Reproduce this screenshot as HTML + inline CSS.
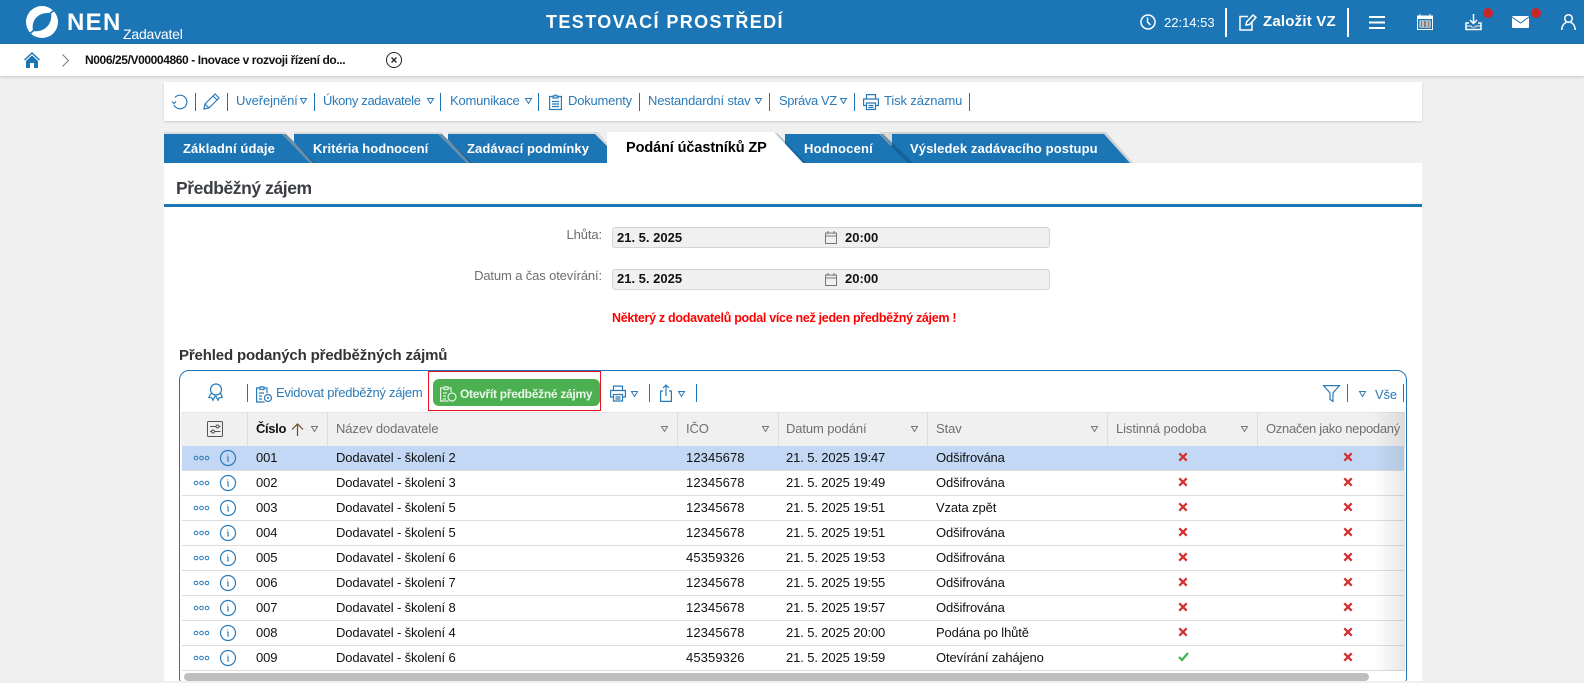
<!DOCTYPE html>
<html lang="cs"><head><meta charset="utf-8"><title>NEN</title>
<style>
html,body{margin:0;padding:0;width:1584px;height:683px;overflow:hidden;background:#f0f0f0}
body{position:relative;font-family:"Liberation Sans",sans-serif;font-size:13px;color:#111}
div,span,svg{position:absolute}
span{white-space:nowrap;line-height:16px}
svg{overflow:visible}
.b{font-weight:bold}
.l{color:#2a7ab8;letter-spacing:-.12px}
.sep{width:1px;height:18px;background:#1c75b5}
.tab{color:#fff;font-weight:bold;top:141px;letter-spacing:.1px}
.hd{color:#6f6f6f;top:421px;letter-spacing:-.1px}
.vs{width:1px;top:412px;height:34px;background:#ddd}
.r{left:182px;width:1222px;height:24px;border-bottom:1px solid #ddd;background:#fff}
.r span{top:4px;letter-spacing:-.12px}
.n{left:74px}.m{left:154px}.r .i{left:504px;letter-spacing:.1px}.d{left:604px}.s{left:754px}
.r svg{top:0;left:0}
.tri{fill:none;stroke:#2a7ab8;stroke-width:1}
.gt{fill:none;stroke:#777;stroke-width:1}
.ic{fill:none;stroke:#2a7ab8;stroke-width:1.2}
.wi{fill:none;stroke:#fff;stroke-width:1.5}
</style></head><body>

<!-- top bar -->
<div style="left:0;top:0;width:1584px;height:44px;background:#1c75b5"></div>
<svg style="left:26px;top:6px" width="32" height="32" viewBox="0 0 32 32">
<circle cx="16" cy="16" r="16" fill="#fff"/>
<path fill="#1c75b5" d="M7 25C5 15 11 6 25 7c2 10-6 20-18 18z"/>
<path d="M24 7.500L29 3.500M7.500 24.500L3 28.500" stroke="#1c75b5" stroke-width="1.600" fill="none"/>
</svg>
<span style="left:67px;top:10px;font-size:24px;line-height:26px;font-weight:bold;color:#fff;letter-spacing:1.300px">NEN</span>
<span style="left:123px;top:26px;font-size:14px;color:#fff;letter-spacing:-.2px">Zadavatel</span>
<span style="left:546px;top:12px;font-size:18px;line-height:21px;font-weight:bold;color:#fff;letter-spacing:1.400px">TESTOVACÍ PROSTŘEDÍ</span>
<svg style="left:1140px;top:14px" width="16" height="16" viewBox="0 0 16 16"><circle cx="8" cy="8" r="7" class="wi"/><path class="wi" d="M7.500 3.500V8l3 3"/></svg>
<span style="left:1164px;top:15px;color:#fff;font-size:13px">22:14:53</span>
<div style="left:1225px;top:8px;width:2px;height:29px;background:#fff"></div>
<svg style="left:1239px;top:14px" width="18" height="17" viewBox="0 0 18 17"><path class="wi" d="M9 2.500H1v13.500h12V8M7 11l.6-3L14 1l3 2.500-6.500 7z"/></svg>
<span class="b" style="left:1263px;top:14px;color:#fff;font-size:15px;letter-spacing:.2px">Založit VZ</span>
<div style="left:1347px;top:8px;width:2px;height:29px;background:#fff"></div>
<svg style="left:1369px;top:15px" width="16" height="15" viewBox="0 0 16 15"><path stroke="#fff" stroke-width="2" d="M0 2h16M0 7.500h16M0 13h16"/></svg>
<svg style="left:1417px;top:14px" width="16" height="16" viewBox="0 0 16 16"><rect x=".5" y="2" width="15" height="13.500" fill="none" stroke="#fff"/><rect y="2" width="16" height="3" fill="#fff"/><path stroke="#fff" d="M3 0v3M13 0v3M3 7h10v6H3zM3 9h10M3 11h10M6 7v6M10 7v6"/></svg>
<svg style="left:1465px;top:14px" width="17" height="17" viewBox="0 0 17 17"><path class="wi" stroke-width="1.200" d="M8.500 0v9M5 6l3.500 3.500L12 6M4 9H1v6.500h15V9h-3"/><path stroke="#fff" d="M1 12h5l1 1h3l1-1h5"/></svg>
<div style="left:1483px;top:8px;width:10px;height:10px;border-radius:5px;background:#c62828"></div>
<svg style="left:1512px;top:16px" width="17" height="12" viewBox="0 0 17 12"><rect width="17" height="12" rx="1" fill="#fff"/><path d="M0 1l8.500 6L17 1" fill="none" stroke="#1c75b5"/></svg>
<div style="left:1531px;top:8px;width:10px;height:10px;border-radius:5px;background:#c62828"></div>
<svg style="left:1561px;top:14px" width="15" height="16" viewBox="0 0 15 16"><circle cx="7.500" cy="4.500" r="3.800" class="wi"/><path class="wi" d="M.8 16c0-4.500 2.500-7 4.500-7.500M14.200 16c0-4.500-2.500-7-4.500-7.500"/></svg>

<!-- breadcrumb -->
<div style="left:0;top:44px;width:1584px;height:32px;background:#fff;box-shadow:0 1px 3px rgba(0,0,0,.18)"></div>
<svg style="left:24px;top:52px" width="16" height="16" viewBox="0 0 16 16"><path fill="#1c75b5" d="M8 0L0 7.500l1 1L8 2l7 6.500 1-1z"/><path fill="#1c75b5" d="M2 9l6-5.500L14 9v7h-4v-5H6v5H2z"/></svg>
<svg style="left:62px;top:54px" width="7" height="13" viewBox="0 0 7 13"><path d="M.5.5l6 6-6 6" fill="none" stroke="#777"/></svg>
<span class="b" style="left:85px;top:52px;font-size:12px;color:#111;letter-spacing:-.4px">N006/25/V00004860 - Inovace v rozvoji řízení do...</span>
<svg style="left:386px;top:52px" width="16" height="16" viewBox="0 0 16 16"><circle cx="8" cy="8" r="7.500" fill="none" stroke="#222"/><path stroke="#222" stroke-width="1.300" d="M5.500 5.500l5 5M10.500 5.500l-5 5"/></svg>

<!-- toolbar -->
<div style="left:164px;top:82px;width:1258px;height:39px;background:#fff;box-shadow:0 1px 2px rgba(0,0,0,.15)"></div>
<svg style="left:172px;top:94px" width="16" height="16" viewBox="0 0 16 16"><path class="ic" d="M3 3.500A6.800 6.800 0 1 1 2 11M0 7.500l2 2 2-2"/></svg>
<div class="sep" style="left:195px;top:93px"></div>
<svg style="left:203px;top:93px" width="17" height="17" viewBox="0 0 17 17"><path class="ic" d="M1 16l1-5L12 1l4 4L6 15zM2 11l4 4M10 3l4 4"/></svg>
<div class="sep" style="left:227px;top:93px"></div>
<span class="l" style="left:236px;top:93px">Uveřejnění</span>
<svg style="left:300px;top:98px" width="7" height="6"><path class="tri" d="M.5.5h6L3.500 5.500z"/></svg>
<div class="sep" style="left:314px;top:93px"></div>
<span class="l" style="left:323px;top:93px;letter-spacing:-.36px">Úkony zadavatele</span>
<svg style="left:427px;top:98px" width="7" height="6"><path class="tri" d="M.5.5h6L3.500 5.500z"/></svg>
<div class="sep" style="left:440px;top:93px"></div>
<span class="l" style="left:450px;top:93px;letter-spacing:-.2px">Komunikace</span>
<svg style="left:525px;top:98px" width="7" height="6"><path class="tri" d="M.5.5h6L3.500 5.500z"/></svg>
<div class="sep" style="left:538px;top:93px"></div>
<svg style="left:549px;top:94px" width="13" height="16" viewBox="0 0 13 16"><path class="ic" d="M4 2.500H.6v13h11.800v-13H9M4 4V2h1.500a1 1 0 0 1 2 0H9v2zM3 7.500h7M3 10h7M3 12.500h7"/></svg>
<span class="l" style="left:568px;top:93px;letter-spacing:-.2px">Dokumenty</span>
<div class="sep" style="left:639px;top:93px"></div>
<span class="l" style="left:648px;top:93px;letter-spacing:-.18px">Nestandardní stav</span>
<svg style="left:755px;top:98px" width="7" height="6"><path class="tri" d="M.5.5h6L3.500 5.500z"/></svg>
<div class="sep" style="left:769px;top:93px"></div>
<span class="l" style="left:779px;top:93px;letter-spacing:-.4px">Správa VZ</span>
<svg style="left:840px;top:98px" width="7" height="6"><path class="tri" d="M.5.5h6L3.500 5.500z"/></svg>
<div class="sep" style="left:854px;top:93px"></div>
<svg style="left:863px;top:94px" width="16" height="16" viewBox="0 0 16 16"><path class="ic" d="M3.500 5V.6h9V5M3.500 11.500H.6V5h14.800v6.500h-2.900M3.500 9h9v6.500h-9zM5.500 11.500h5M5.500 13.500h5"/></svg>
<span class="l" style="left:884px;top:93px">Tisk záznamu</span>
<div class="sep" style="left:969px;top:93px"></div>

<!-- tabs -->
<svg style="left:0;top:0" width="1584" height="170">
<polygon points="891,132 1106,132 1133,163 891,163" fill="#d2d2d2"/>
<polygon points="891,134 1104,134 1130,163 891,163" fill="#1c75b5"/>
<polygon points="785,134 879,134 908,163 785,163" fill="#1c75b5"/>
<polygon points="879,132 892,132 892,146" fill="#d8d8d8"/>
<polygon points="448,132 598,132 610,146 448,163" fill="#dcdcdc"/>
<polygon points="448,134 595,134 607,146 607,163 448,163" fill="#1c75b5"/>
<polygon points="294,132 441,132 470,163 294,163" fill="#dcdcdc"/>
<polygon points="294,134 438,134 467,163 294,163" fill="#1c75b5"/>
<polygon points="164,132 285,132 313,163 164,163" fill="#dcdcdc"/>
<polygon points="282,134 310,163 315,163 286,134" fill="#0f4f80" opacity=".55"/>
<polygon points="164,134 282,134 310,163 164,163" fill="#1c75b5"/>
<polygon points="438,134 467,163 472,163 442,134" fill="#0f4f80" opacity=".55"/>
<polygon points="879,134 908,163 913,163 883,134" fill="#0f4f80" opacity=".55"/>
<polygon points="774,132 803,163 807,163 778,134" fill="#0f4f80" opacity=".3"/>
<polygon points="607,132 774,132 803,163 607,163" fill="#fff"/>
</svg>
<span class="tab" style="left:183px;letter-spacing:.12px">Základní údaje</span>
<span class="tab" style="left:313px;letter-spacing:.02px">Kritéria hodnocení</span>
<span class="tab" style="left:467px;letter-spacing:.08px">Zadávací podmínky</span>
<span class="b" style="left:626px;top:140px;font-size:14.500px;color:#000;letter-spacing:-.1px">Podání účastníků ZP</span>
<span class="tab" style="left:804px;letter-spacing:.2px">Hodnocení</span>
<span class="tab" style="left:910px;letter-spacing:.1px">Výsledek zadávacího postupu</span>

<!-- panel -->
<div style="left:164px;top:163px;width:1258px;height:518px;background:#fff"></div>
<span class="b" style="left:176px;top:178px;font-size:17.500px;line-height:20px;color:#3b3e44;letter-spacing:-.42px">Předběžný zájem</span>
<div style="left:164px;top:204px;width:1258px;height:3px;background:#1c75b5"></div>

<span style="right:982px;top:227px;color:#6e6e6e;letter-spacing:-.1px">Lhůta:</span>
<div style="left:612px;top:227px;width:436px;height:19px;background:#f0f0f0;border:1px solid #d4d4d4;border-radius:3px"></div>
<span class="b" style="left:617px;top:230px;color:#111">21. 5. 2025</span>
<svg style="left:825px;top:231px" width="12" height="13" viewBox="0 0 12 13"><path class="gt" d="M.5 2h11v10.500H.5zM.5 5h11M3 0v3M9 0v3"/></svg>
<span class="b" style="left:845px;top:230px;color:#111">20:00</span>

<span style="right:982px;top:268px;color:#6e6e6e;letter-spacing:-.13px">Datum a čas otevírání:</span>
<div style="left:612px;top:269px;width:436px;height:19px;background:#f0f0f0;border:1px solid #d4d4d4;border-radius:3px"></div>
<span class="b" style="left:617px;top:271px;color:#111">21. 5. 2025</span>
<svg style="left:825px;top:273px" width="12" height="13" viewBox="0 0 12 13"><path class="gt" d="M.5 2h11v10.500H.5zM.5 5h11M3 0v3M9 0v3"/></svg>
<span class="b" style="left:845px;top:271px;color:#111">20:00</span>

<span class="b" style="left:612px;top:310px;color:#f00;font-size:12.500px;letter-spacing:-.3px">Některý z dodavatelů podal více než jeden předběžný zájem !</span>
<span class="b" style="left:179px;top:348px;font-size:15px;color:#333;letter-spacing:-.15px">Přehled podaných předběžných zájmů</span>

<!-- grid -->
<div style="left:179px;top:370px;width:1226px;height:316px;border:1.500px solid #1c75b5;border-radius:10px;box-sizing:content-box;background:#fff"></div>

<svg style="left:208px;top:383px" width="16" height="18" viewBox="0 0 16 18"><circle cx="8" cy="6.500" r="5.500" class="ic"/><path class="ic" d="M3.500 10L.8 14.500l3 .3 1.200 2.500 2-4 1 0 2 4 1.200-2.500 3-.3L12.500 10"/></svg>
<div class="sep" style="left:247px;top:384px"></div>
<svg style="left:256px;top:385px" width="17" height="18" viewBox="0 0 17 18"><path class="ic" d="M4 3H.6v14h8M11 8V3H8M4 4.500V2h1.500a1 1 0 0 1 1.500 0H8v2.500zM3 8h5M3 11h3M3 14h3"/><circle cx="12" cy="13" r="3.500" class="ic"/><circle cx="12" cy="13" r="1" fill="#2a7ab8"/></svg>
<span class="l" style="left:276px;top:385px;letter-spacing:-.25px">Evidovat předběžný zájem</span>

<div style="left:428px;top:371px;width:171px;height:38px;border:1px solid #e8141e"></div>
<div style="left:433px;top:379px;width:167px;height:27px;background:#4caf50;border-radius:6px"></div>
<svg style="left:440px;top:385px" width="17" height="17" viewBox="0 0 17 17"><path fill="none" stroke="#e2f2e3" stroke-width="1.200" d="M4 3H.6v13h8M11 7V3H8M4 4.500V2h1.500a1 1 0 0 1 1.500 0H8v2.500zM3 8h4M3 11h3M3 14h3"/><circle cx="12" cy="12" r="4" fill="none" stroke="#e2f2e3" stroke-width="1.200"/></svg>
<span class="b" style="left:460px;top:386px;color:#e9f6ea;font-size:12px;letter-spacing:-.28px">Otevřít předběžné zájmy</span>

<svg style="left:610px;top:385px" width="16" height="17" viewBox="0 0 16 16"><path class="ic" d="M3.500 5V.6h9V5M3.500 11.500H.6V5h14.800v6.500h-2.900M3.500 9h9v6.500h-9zM5.500 11.500h5M5.500 13.500h5"/></svg>
<svg style="left:631px;top:391px" width="7" height="6"><path class="tri" d="M.5.5h6L3.500 5.500z"/></svg>
<div class="sep" style="left:649px;top:384px"></div>
<svg style="left:660px;top:384px" width="12" height="18" viewBox="0 0 12 18"><path class="ic" d="M3 7H.6v10.400h10.800V7H9M6 12V1M3 4l3-3 3 3"/></svg>
<svg style="left:678px;top:391px" width="7" height="6"><path class="tri" d="M.5.5h6L3.500 5.500z"/></svg>
<div class="sep" style="left:696px;top:384px"></div>
<svg style="left:1323px;top:385px" width="17" height="17" viewBox="0 0 17 17"><path class="ic" d="M.6.6h15.800L10 8v8.400l-3-2V8z"/></svg>
<div class="sep" style="left:1347px;top:384px"></div>
<svg style="left:1359px;top:391px" width="7" height="6"><path class="tri" d="M.5.5h6L3.500 5.500z"/></svg>
<span class="l" style="left:1375px;top:387px">Vše</span>
<div class="sep" style="left:1403px;top:384px"></div>

<!-- header -->
<div style="left:181px;top:412px;width:1224px;height:34px;background:#f0f0f0;border-top:1px solid #e4e4e4;box-sizing:border-box"></div>
<div class="vs" style="left:247px"></div>
<div class="vs" style="left:327px"></div>
<div class="vs" style="left:677px"></div>
<div class="vs" style="left:778px"></div>
<div class="vs" style="left:927px"></div>
<div class="vs" style="left:1107px"></div>
<div class="vs" style="left:1257px"></div>
<svg style="left:207px;top:421px" width="16" height="16" viewBox="0 0 16 16"><rect x=".5" y=".5" width="15" height="15" rx="1" fill="none" stroke="#555"/><path stroke="#555" fill="none" d="M3 5.500h6M12 5.500h1.500M3 10.500h1.500M8 10.500h5.500"/><circle cx="10.500" cy="5.500" r="1.500" fill="none" stroke="#555"/><circle cx="6" cy="10.500" r="1.500" fill="none" stroke="#555"/></svg>
<span class="b" style="left:256px;top:421px;color:#111;letter-spacing:-.35px">Číslo</span>
<svg style="left:291px;top:423px" width="13" height="13" viewBox="0 0 13 13"><path d="M6.500 13V1M1 6.500L6.500 1 12 6.500" fill="none" stroke="#6b4a2a" stroke-width="1.200"/></svg>
<svg style="left:311px;top:426px" width="7" height="6"><path class="gt" d="M.5.5h6L3.500 5.500z"/></svg>
<span class="hd" style="left:336px">Název dodavatele</span>
<svg style="left:661px;top:426px" width="7" height="6"><path class="gt" d="M.5.5h6L3.500 5.500z"/></svg>
<span class="hd" style="left:686px">IČO</span>
<svg style="left:762px;top:426px" width="7" height="6"><path class="gt" d="M.5.5h6L3.500 5.500z"/></svg>
<span class="hd" style="left:786px">Datum podání</span>
<svg style="left:911px;top:426px" width="7" height="6"><path class="gt" d="M.5.5h6L3.500 5.500z"/></svg>
<span class="hd" style="left:936px">Stav</span>
<svg style="left:1091px;top:426px" width="7" height="6"><path class="gt" d="M.5.5h6L3.500 5.500z"/></svg>
<span class="hd" style="left:1116px">Listinná podoba</span>
<svg style="left:1241px;top:426px" width="7" height="6"><path class="gt" d="M.5.5h6L3.500 5.500z"/></svg>
<span class="hd" style="left:1266px;letter-spacing:-.3px">Označen jako nepodaný</span>

<!-- shared symbols -->
<svg width="0" height="0" style="left:0;top:0"><defs>
<g id="act"><circle cx="14" cy="12" r="1.800" fill="none" stroke="#2a7ab8"/><circle cx="19.500" cy="12" r="1.800" fill="none" stroke="#2a7ab8"/><circle cx="25" cy="12" r="1.800" fill="none" stroke="#2a7ab8"/><circle cx="46" cy="12" r="7.500" fill="none" stroke="#2a7ab8" stroke-width="1.200"/><path d="M45.500 8.500v.8M45 11h1v4h1" fill="none" stroke="#2a7ab8" stroke-width="1.100"/></g>
<path id="xx" d="M-3.700-3.700L3.700 3.700M3.700-3.700L-3.700 3.700" stroke="#d32f2f" stroke-width="2.200" fill="none"/>
</defs></svg>

<div class="r" style="top:446px;background:#c2d8f4"><svg width="1222" height="25"><use href="#act"/><use href="#xx" x="1001" y="11"/><use href="#xx" x="1166" y="11"/></svg><span class="n">001</span><span class="m">Dodavatel - školení 2</span><span class="i">12345678</span><span class="d">21. 5. 2025 19:47</span><span class="s">Odšifrována</span></div>
<div class="r" style="top:471px"><svg width="1222" height="25"><use href="#act"/><use href="#xx" x="1001" y="11"/><use href="#xx" x="1166" y="11"/></svg><span class="n">002</span><span class="m">Dodavatel - školení 3</span><span class="i">12345678</span><span class="d">21. 5. 2025 19:49</span><span class="s">Odšifrována</span></div>
<div class="r" style="top:496px"><svg width="1222" height="25"><use href="#act"/><use href="#xx" x="1001" y="11"/><use href="#xx" x="1166" y="11"/></svg><span class="n">003</span><span class="m">Dodavatel - školení 5</span><span class="i">12345678</span><span class="d">21. 5. 2025 19:51</span><span class="s">Vzata zpět</span></div>
<div class="r" style="top:521px"><svg width="1222" height="25"><use href="#act"/><use href="#xx" x="1001" y="11"/><use href="#xx" x="1166" y="11"/></svg><span class="n">004</span><span class="m">Dodavatel - školení 5</span><span class="i">12345678</span><span class="d">21. 5. 2025 19:51</span><span class="s">Odšifrována</span></div>
<div class="r" style="top:546px"><svg width="1222" height="25"><use href="#act"/><use href="#xx" x="1001" y="11"/><use href="#xx" x="1166" y="11"/></svg><span class="n">005</span><span class="m">Dodavatel - školení 6</span><span class="i">45359326</span><span class="d">21. 5. 2025 19:53</span><span class="s">Odšifrována</span></div>
<div class="r" style="top:571px"><svg width="1222" height="25"><use href="#act"/><use href="#xx" x="1001" y="11"/><use href="#xx" x="1166" y="11"/></svg><span class="n">006</span><span class="m">Dodavatel - školení 7</span><span class="i">12345678</span><span class="d">21. 5. 2025 19:55</span><span class="s">Odšifrována</span></div>
<div class="r" style="top:596px"><svg width="1222" height="25"><use href="#act"/><use href="#xx" x="1001" y="11"/><use href="#xx" x="1166" y="11"/></svg><span class="n">007</span><span class="m">Dodavatel - školení 8</span><span class="i">12345678</span><span class="d">21. 5. 2025 19:57</span><span class="s">Odšifrována</span></div>
<div class="r" style="top:621px"><svg width="1222" height="25"><use href="#act"/><use href="#xx" x="1001" y="11"/><use href="#xx" x="1166" y="11"/></svg><span class="n">008</span><span class="m">Dodavatel - školení 4</span><span class="i">12345678</span><span class="d">21. 5. 2025 20:00</span><span class="s">Podána po lhůtě</span></div>
<div class="r" style="top:646px"><svg width="1222" height="25"><use href="#act"/><path d="M997 11l3 3 6-7" fill="none" stroke="#3fb54a" stroke-width="2.200"/><use href="#xx" x="1166" y="11"/></svg><span class="n">009</span><span class="m">Dodavatel - školení 6</span><span class="i">45359326</span><span class="d">21. 5. 2025 19:59</span><span class="s">Otevírání zahájeno</span></div>

<div style="left:1374px;top:412px;width:31px;height:259px;background:linear-gradient(to right,rgba(120,120,120,0),rgba(120,120,120,.18))"></div>
<div style="left:184px;top:673px;width:1185px;height:8px;border-radius:4px;background:#bebebe"></div>
<div style="left:0;top:681px;width:1584px;height:2px;background:#f0f0f0"></div>
</body></html>
